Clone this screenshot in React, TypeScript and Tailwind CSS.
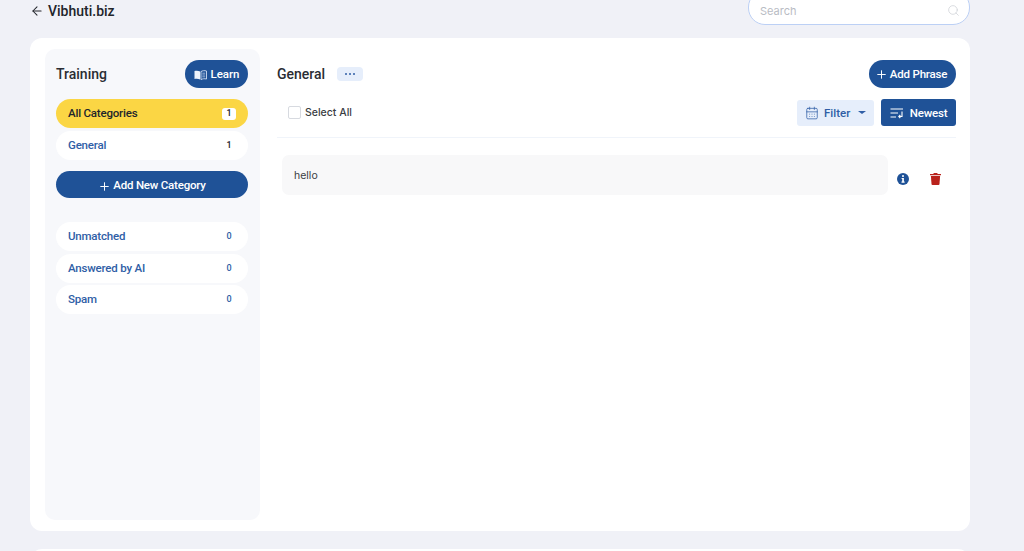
// App.tsx
import React from 'react';
import { ArrowLeft, Search, Plus, CalendarDays } from 'lucide-react';

const barlow = 'font-["Roboto",sans-serif]';

function CategoryRow({ label, count, active }: { label: string; count: number; active?: boolean }) {
  return (
    <div
      className={`flex items-center justify-between rounded-full pl-3 pr-3 pt-px h-[29px] ${
        active ? 'bg-[#fbd644]' : 'bg-white'
      }`}
    >
      <span className={`text-[11.5px] font-medium tracking-[-0.2px] ${active ? 'text-[#22252b]' : 'text-[#2f5ea6]'}`}>
        {label}
      </span>
      <span
        className={`flex items-center justify-center w-[14px] h-[12px] rounded-[3px] text-[9px] font-medium ${
          active ? 'bg-white text-[#22252b]' : count ? 'text-[#22252b]' : 'text-[#2f5ea6]'
        }`}
      >
        {count}
      </span>
    </div>
  );
}

function BookIcon() {
  return (
    <svg width="13" height="10" viewBox="0 0 13 10" fill="none">
      <path d="M0.5 1C2.5 .4 4.5 .6 6.2 1.6V9.6C4.5 8.7 2.5 8.5 .5 9Z" fill="#eef3fb" />
      <path d="M7 1.6C8.5 .6 10.5 .4 12.5 1V9C10.5 8.5 8.5 8.7 7 9.6Z" fill="none" stroke="#cfdcf0" strokeWidth="0.9" />
      <path d="M8.3 3.2H11.2M8.3 5H11.2M8.3 6.8H11.2" stroke="#cfdcf0" strokeWidth="0.7" />
    </svg>
  );
}

function SortIcon() {
  return (
    <svg width="14" height="11" viewBox="0 0 14 11" fill="none" stroke="white" strokeWidth="1.1">
      <path d="M0.5 1H13M0.5 5H8M0.5 9H6" />
      <path d="M12 3.5V8.5H8.8M10.3 7 8.8 8.5 10.3 10" />
    </svg>
  );
}

function InfoIcon() {
  return (
    <svg width="12" height="12" viewBox="0 0 12 12">
      <circle cx="6" cy="6" r="6" fill="#1f5297" />
      <rect x="5.1" y="2.2" width="1.8" height="1.7" fill="white" />
      <path d="M4.6 5H6.9V8.6H7.6V9.8H4.5V8.6H5.2V6.1H4.6Z" fill="white" />
    </svg>
  );
}

function TrashIcon() {
  return (
    <svg width="11" height="12" viewBox="0 0 11 12" fill="#b9221c">
      <path d="M3.8 0H7.2L7.7 1H11V2.3H0V1H3.3Z" />
      <path d="M.9 3H10.1L9.5 11.1C9.45 11.6 9.1 12 8.6 12H2.4C1.9 12 1.55 11.6 1.5 11.1Z" />
    </svg>
  );
}

export default function App() {
  return (
    <div className={`h-[551px] overflow-hidden bg-[#f0f1f7] ${barlow}`}>
      {/* Top bar */}
      <header className="flex items-start justify-between h-[38px] pl-[30px] pr-[54px]">
        <div className="flex items-center gap-[4px] h-[22px]">
          <ArrowLeft className="w-[14px] h-[14px] text-[#22252b]" strokeWidth={1.8} />
          <span className="text-[14px] font-medium text-[#22252b]">Vibhuti.biz</span>
        </div>
        <div className="flex items-center justify-between w-[222px] h-[35px] -mt-[10px] pt-[7px] pl-[11px] pr-[9px] bg-white border border-[#bcd0f5] rounded-[17px]">
          <span className='text-[11px] text-[#b9bcc4] font-["Inter",sans-serif]'>Search</span>
          <Search className="w-[13px] h-[13px] -mt-px text-[#c8cad0]" strokeWidth={1.2} />
        </div>
      </header>

      {/* Main card */}
      <main className="flex w-[940px] h-[493px] ml-[30px] bg-white rounded-[12px] pt-[11px] pl-[15px]">
        {/* Sidebar */}
        <aside className="w-[215px] h-[471px] bg-[#f7f8fb] rounded-[10px] pl-[11px] pr-[12px] pt-[11px]">
          <div className="flex items-center justify-between h-[28px] mb-[11px]">
            <h2 className="text-[14px] font-medium text-[#2a2d33]">Training</h2>
            <button className="flex items-center justify-center gap-[3px] w-[63px] h-[28px] pt-px pl-px rounded-full bg-[#1f5297] text-white text-[11.5px] font-medium">
              <BookIcon />
              Learn
            </button>
          </div>
          <div className="flex flex-col gap-[3px]">
            <CategoryRow label="All Categories" count={1} active />
            <CategoryRow label="General" count={1} />
          </div>
          <button className="flex items-center justify-center gap-[2px] w-full h-[27px] mt-[11px] pt-[3px] rounded-full bg-[#1f5297] text-white text-[11.5px] font-medium tracking-[-0.2px]">
            <Plus className="w-[13px] h-[13px]" strokeWidth={1.8} />
            Add New Category
          </button>
          <div className="flex flex-col gap-[2.5px] mt-[24px]">
            <CategoryRow label="Unmatched" count={0} />
            <CategoryRow label="Answered by AI" count={0} />
            <CategoryRow label="Spam" count={0} />
          </div>
        </aside>

        {/* Content */}
        <section className="w-[679px] ml-[17px] pt-[11px]">
          <div className="flex items-center justify-between h-[28px]">
            <div className="flex items-center gap-3">
              <h2 className="text-[14px] font-medium text-[#2a2d33]">General</h2>
              <span className="flex items-center justify-center gap-[2px] w-[26px] h-[14px] rounded-[4px] bg-[#e6eefb]">
                <i className="w-[2px] h-[2px] rounded-full bg-[#2f5ea6]" />
                <i className="w-[2px] h-[2px] rounded-full bg-[#2f5ea6]" />
                <i className="w-[2px] h-[2px] rounded-full bg-[#2f5ea6]" />
              </span>
            </div>
            <button className="flex items-center justify-center gap-[2px] w-[87px] h-[28px] pt-px pr-[3px] rounded-full bg-[#1f5297] text-white text-[11.5px] font-medium tracking-[-0.2px]">
              <Plus className="w-[13px] h-[13px]" strokeWidth={1.8} />
              Add Phrase
            </button>
          </div>

          <div className="flex items-center justify-between h-[27px] mt-[11px] pl-[11px]">
            <label className="flex items-center gap-[4px]">
              <span className="w-[13px] h-[13px] rounded-[2px] bg-white border border-[#d7dae0]" />
              <span className='text-[10.5px] font-medium text-[#3a3d43] font-["Inter",sans-serif]'>Select All</span>
            </label>
            <div className="flex items-center gap-[7px]">
              <button className="flex items-center w-[77px] h-[26px] pl-2 pt-[2px] rounded-[3px] bg-[#e6eefb] text-[#2f5ea6] text-[11.5px] font-medium">
                <CalendarDays className="w-[14px] h-[14px] -mt-[2px]" strokeWidth={1.3} />
                <span className="ml-[5px]">Filter</span>
                <span className="ml-[8px] -mt-[2px] border-x-[4px] border-x-transparent border-t-[3.5px] border-t-[#2f5ea6]" />
              </button>
              <button className="flex items-center justify-center gap-[6px] w-[75px] h-[27px] pt-[2px] rounded-[3px] bg-[#1f5297] text-white text-[11.5px] font-medium tracking-[-0.2px]">
                <SortIcon />
                Newest
              </button>
            </div>
          </div>

          <div className="h-px mt-[11px] bg-[#f0f4fa]" />

          <div className="flex items-center mt-[17px] pl-[5px]">
            <div className='flex items-center w-[606px] h-[40px] pl-3 pt-[2px] rounded-[7px] bg-[#f8f8f9] text-[10.5px] text-[#3a3d43] font-["Inter",sans-serif]'>
              hello
            </div>
            <div className="flex items-center mt-[8px] ml-[9px]">
              <InfoIcon />
              <span className="ml-[21px]">
                <TrashIcon />
              </span>
            </div>
          </div>
        </section>
      </main>

      {/* Next card, cut off by the window */}
      <div className="w-[940px] h-[40px] ml-[30px] mt-[18px] bg-white rounded-[12px]" />
    </div>
  );
}
